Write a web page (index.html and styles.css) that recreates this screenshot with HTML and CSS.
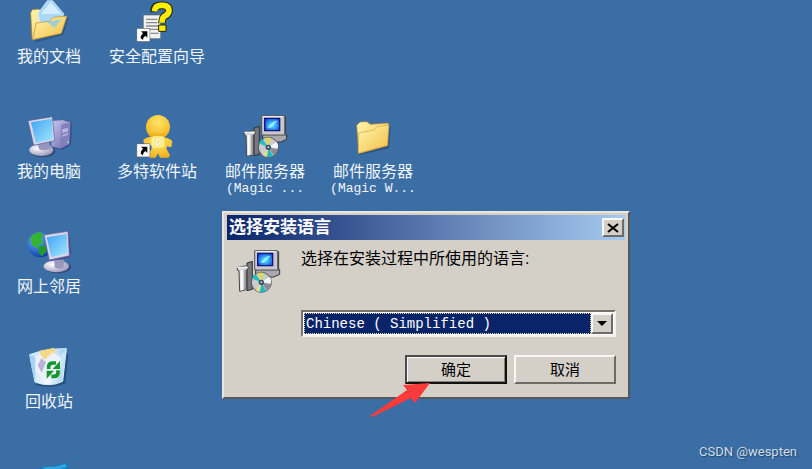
FILE: index.html
```html
<!DOCTYPE html>
<html lang="zh-CN">
<head>
    <meta charset="UTF-8">
    <meta name="viewport" content="width=device-width, initial-scale=1.0">
    <title>选择安装语言</title>
    <link rel="stylesheet" href="styles.css">
</head>
<body>
    <!-- Shared icon parts -->
    <svg class="defs" width="0" height="0" aria-hidden="true">
        <defs>
            <linearGradient id="folder" x1="0" y1="0" x2="1" y2="1">
                <stop offset="0" stop-color="#fff6ae"/>
                <stop offset="1" stop-color="#f2bd45"/>
            </linearGradient>
            <linearGradient id="screen" x1="0" y1="0" x2="1" y2="1">
                <stop offset="0" stop-color="#3fa4f4"/>
                <stop offset="1" stop-color="#a4e6ff"/>
            </linearGradient>
            <linearGradient id="tower" x1="0" y1="0" x2="1" y2="1">
                <stop offset="0" stop-color="#c9c8ee"/>
                <stop offset="1" stop-color="#6563a8"/>
            </linearGradient>
            <radialGradient id="base" cx="0.35" cy="0.35" r="0.7">
                <stop offset="0" stop-color="#ffffff"/>
                <stop offset="1" stop-color="#9d98bd"/>
            </radialGradient>
            <radialGradient id="gold" cx="0.5" cy="0.3" r="0.7">
                <stop offset="0" stop-color="#ffe66a"/>
                <stop offset="1" stop-color="#f3b21c"/>
            </radialGradient>
            <radialGradient id="globe" cx="0.35" cy="0.3" r="0.75">
                <stop offset="0" stop-color="#62b4f5"/>
                <stop offset="1" stop-color="#0c3bab"/>
            </radialGradient>
            <radialGradient id="glow" cx="0.5" cy="0.55" r="0.6">
                <stop offset="0" stop-color="#62f2ff"/>
                <stop offset="1" stop-color="#1148e0"/>
            </radialGradient>
            <linearGradient id="bin" x1="0" y1="0" x2="1" y2="0">
                <stop offset="0" stop-color="#bfe4fa"/>
                <stop offset="0.5" stop-color="#f4f8fd"/>
                <stop offset="1" stop-color="#9cc9ec"/>
            </linearGradient>
            <symbol id="installer" viewBox="93 45 144 132">
                <path d="M132 84l16-5v84l-16 4z" fill="#77777d" stroke="#333" stroke-width="3"/>
                <path d="M103 97l30-5 3 8-6 5v59l-20 5-2-62-5-2z" fill="#d8d8dc" stroke="#444" stroke-width="3"/>
                <path d="M116 106v60" stroke="#fff" stroke-width="6"/>
                <path d="M126 104v60" stroke="#8b8b90" stroke-width="4"/>
                <path d="M103 97h31" stroke="#f5f5f5" stroke-width="4"/>
                <path d="M158 104h72v14l-18 8h-54z" fill="#a9a9ae" stroke="#333" stroke-width="3"/>
                <path d="M155 47h68l4 4v54h-72z" fill="#c9c9cd" stroke="#55555a" stroke-width="3"/>
                <path d="M225 49v54" stroke="#37373c" stroke-width="4"/>
                <path d="M158 50h60" stroke="#f6f6f6" stroke-width="3"/>
                <path d="M164 55h45v37h-45z" fill="url(#glow)" stroke="#15157e" stroke-width="4"/>
                <path d="M171 82l23-20 10 0-23 22z" fill="#a4ffff" opacity=".7"/>
                <circle cx="175" cy="142" r="30" fill="#c9cbce" stroke="#53565c" stroke-width="3"/>
                <path d="M175 142l-12-27q12-5 21 0z" fill="#d9d866"/>
                <path d="M175 142l-28-12q4-8 11-12z" fill="#20bfc5"/>
                <path d="M175 142l-4 29q10 2 18-3z" fill="#21b8c4"/>
                <path d="M175 142l-17 24q6 4 12 5z" fill="#e7dc83"/>
                <path d="M175 142l25-17q6 9 4 20z" fill="#f4f4f4"/>
                <path d="M175 142l28 6q-3 12-12 18z" fill="#8b8d91"/>
                <circle cx="175" cy="142" r="8" fill="#334e62"/>
                <circle cx="175" cy="142" r="3" fill="#c6dae6"/>
            </symbol>
            <symbol id="shortcut-arrow" viewBox="0 0 42 42">
                <path d="M1 1h40v40H1z" fill="#fff" stroke="#444" stroke-width="2"/>
                <path d="M14 10h19v19l-6-6q-8 5-7 13l-7-5q-1-8 7-15z" fill="#000"/>
            </symbol>
        </defs>
    </svg>

    <main class="desktop">
        <button class="shortcut col-1 row-1" type="button">
            <svg class="icon" viewBox="75 0 144 132" aria-hidden="true">
                <path d="M103 122l82-22 18-48 3 4-17 49-80 22z" fill="#24476f" opacity=".6"/>
                <path d="M92 38l5-9 20-2 7 9 66 8-6 56-88 18z" fill="url(#folder)" stroke="#a67b28" stroke-width="2"/>
                <path d="M114 40l28-38h16l34 40-30 44-44-20z" fill="#a9d8fb" stroke="#e2f5ff" stroke-width="2"/>
                <path d="M122 42l30-36 32 36z" fill="#d3eeff"/>
                <path d="M98 119l11-50 40-5 10-12 42-4-17 52z" fill="url(#folder)" stroke="#bd8c2e" stroke-width="2"/>
                <path d="M142 66l42-8-21 26z" fill="#86cbef" opacity=".8"/>
            </svg>
            <span class="label">我的文档</span>
        </button>

        <button class="shortcut col-2 row-1" type="button">
            <svg class="icon" viewBox="399 0 144 132" aria-hidden="true">
                <path d="M430 45h52v71h-52z" fill="#f1f1f1" stroke="#666" stroke-width="2"/>
                <path d="M438 58h34M438 68h34M438 78h38M438 88h38M452 100h24" stroke="#8b8b8b" stroke-width="4"/>
                <path d="M461 36q1-20 20-20h10q16 2 16 15 0 11-12 17-9 4-9 22" fill="none" stroke="#24240a" stroke-width="23"/>
                <path d="M463 34q2-17 18-18h10q16 2 16 15 0 11-12 17-9 4-9 20" fill="none" stroke="#ffee00" stroke-width="17"/>
                <path d="M476 75h22v19h-22z" fill="#ffee00" stroke="#24240a" stroke-width="3"/>
                <use href="#shortcut-arrow" x="409" y="84" width="42" height="42"/>
            </svg>
            <span class="label">安全配置向导</span>
        </button>

        <button class="shortcut col-1 row-2" type="button">
            <svg class="icon" viewBox="75 45 144 132" aria-hidden="true">
                <path d="M158 66l35-8 22 10-2 67-29 15-26-8z" fill="#32336f" opacity=".6"/>
                <path d="M154 63l35-3 22 7-2 65-28 14-27-7z" fill="url(#tower)"/>
                <path d="M184 74l25-6-2 64-25 13z" fill="#817fbd"/>
                <path d="M187 88l17-5v11l-17 6zM187 105l17-6v5l-17 6z" fill="#b8b5df"/>
                <circle cx="204" cy="127" r="3" fill="#8de39a"/>
                <ellipse cx="128" cy="154" rx="38" ry="18" fill="#263457" opacity=".6"/>
                <ellipse cx="124" cy="150" rx="36" ry="18" fill="url(#base)"/>
                <path d="M112 127l33-5 8 23q-22 10-36 2z" fill="#9896bf"/>
                <path d="M84 62l73-12 7 72-63 14z" fill="#dad8e8" stroke="#5c5794" stroke-width="2"/>
                <path d="M93 67l62-11 4 62-52 10z" fill="url(#screen)"/>
            </svg>
            <span class="label">我的电脑</span>
        </button>

        <button class="shortcut col-2 row-2" type="button">
            <svg class="icon" viewBox="399 45 144 132" aria-hidden="true">
                <path d="M430 119q16-11 38-11t45 11l4 5-3 18-14-3v9l10 18-5 7h-25l-6-13-7 13h-19l-3-7 10-20v-10l-20-2q-6-8-5-15z" fill="url(#gold)"/>
                <circle cx="474" cy="81" r="36" fill="url(#gold)"/>
                <path d="M442 95q31 13 63 0-6 13-16 17h-31q-10-4-16-17z" fill="#f0af1b" opacity=".7"/>
                <rect x="454" y="109" width="39" height="34" rx="9" fill="#fff08d"/>
                <path d="M468 115h5q11 3 11 11t-12 11h-7zM472 120v11q7-1 7-6t-7-5z" fill="#fff" fill-rule="evenodd" stroke="#e6ad25"/>
                <use href="#shortcut-arrow" x="409" y="130" width="42" height="42"/>
            </svg>
            <span class="label">多特软件站</span>
        </button>

        <button class="shortcut col-3 row-2" type="button">
            <svg class="icon" aria-hidden="true"><use href="#installer"/></svg>
            <span class="label">邮件服务器</span>
            <span class="label-more">(Magic ...</span>
        </button>

        <button class="shortcut col-4 row-2" type="button">
            <svg class="icon" viewBox="417 45 144 132" aria-hidden="true">
                <path d="M447 163l88-20 5-65-6 60z" fill="#20446c" stroke="#20446c" stroke-width="4" opacity=".6"/>
                <path d="M440 76l10-10 21-1 10 8 54-4-2 68-87 24z" fill="url(#folder)" stroke="#a8802c" stroke-width="2"/>
                <path d="M445 159l1-60 46-9 9-10 36-5-5 61z" fill="url(#folder)" stroke="#d8a541" stroke-width="2"/>
            </svg>
            <span class="label">邮件服务器</span>
            <span class="label-more">(Magic W...</span>
        </button>

        <button class="shortcut col-1 row-3" type="button">
            <svg class="icon" viewBox="75 45 144 132" aria-hidden="true">
                <circle cx="121" cy="89" r="38" fill="url(#globe)"/>
                <path d="M91 68q14-19 34-15l6 10-9 9 10 11-15 5-2 12-19-9z" fill="#35b52f"/>
                <path d="M116 95l18-5 7 17-15 17-10-11z" fill="#249b27"/>
                <ellipse cx="174" cy="157" rx="39" ry="18" fill="#263457" opacity=".6"/>
                <ellipse cx="169" cy="154" rx="38" ry="18" fill="url(#base)"/>
                <path d="M163 134h30l-3 25q-15 5-26-2z" fill="#9b98be"/>
                <path d="M132 62l75-14 7 69-7 11-59 10z" fill="#4c4a91"/>
                <path d="M132 60l72-11 4 73-60 13z" fill="#d8d6e9" stroke="#6b659e" stroke-width="2"/>
                <path d="M140 67l60-10 3 58-49 11z" fill="url(#screen)"/>
            </svg>
            <span class="label">网上邻居</span>
        </button>

        <button class="shortcut col-1 row-4" type="button">
            <svg class="icon" viewBox="75 30 144 132" aria-hidden="true">
                <path d="M107 147q42 14 80-2l16-88-9 87q-42 18-87 3z" fill="#173a62" stroke="#173a62" stroke-width="4" opacity=".6"/>
                <path d="M89 59q50-19 110-18l-11 98q-40 19-83 2z" fill="url(#bin)" stroke="#d6efff" stroke-width="3"/>
                <path d="M117 48l45-10 8 29-39 9z" fill="#f5d886"/>
                <path d="M98 68l22-10 14 16 25-22 28 17-10 50-43 15-29-25z" fill="#eef0fb"/>
                <path d="M124 70l14 12-13 31-12-22z" fill="#b8b6d8"/>
                <path d="M89 59l17 7-1 73q-10-30-16-80z" fill="#a0d3f4"/>
                <path d="M199 41l-19 22 8 74z" fill="#c5e5fa"/>
                <path d="M146 102v-8q1-10 12-10h10" fill="none" stroke="#11972c" stroke-width="11"/>
                <path d="M180 78v24h-22z" fill="#11972c"/>
                <path d="M174 106v8q-1 10-12 10h-8" fill="none" stroke="#11972c" stroke-width="11"/>
                <path d="M140 131v-24h22z" fill="#11972c"/>
            </svg>
            <span class="label">回收站</span>
        </button>

        <button class="shortcut col-1 row-5" type="button" aria-label="程序">
            <svg class="icon" viewBox="75 375 144 132" aria-hidden="true">
                <path d="M116 401q20-8 44-7l38-10 7 8 2 70h-90z" fill="#127fc0"/>
                <path d="M124 399q20-5 38-3l34-9 4 10-40 10z" fill="#2fa5dc"/>
            </svg>
        </button>
    </main>

    <section class="dialog" role="dialog" aria-labelledby="dialog-title">
        <header class="titlebar">
            <h1 id="dialog-title">选择安装语言</h1>
            <button class="close" type="button" aria-label="关闭">
                <svg width="12" height="10" viewBox="0 0 12 10" aria-hidden="true">
                    <path d="M1 1l10 8M11 1L1 9" stroke="#000" stroke-width="2"/>
                </svg>
            </button>
        </header>
        <form class="content">
            <svg class="icon" aria-hidden="true"><use href="#installer"/></svg>
            <div class="fields">
                <label for="language">选择在安装过程中所使用的语言:</label>
                <div class="combo">
                    <select id="language">
                        <option>Chinese ( Simplified )</option>
                    </select>
                    <span class="drop" aria-hidden="true"></span>
                </div>
            </div>
            <div class="actions">
                <button class="action default" type="button">确定</button>
                <button class="action" type="button">取消</button>
            </div>
        </form>
    </section>

    <!-- Points at the confirm button -->
    <svg class="pointer" viewBox="0 0 62 36" aria-hidden="true">
        <path d="M1 34L38 8 34 3 61 1 46 21 42 16 3 35z" fill="#fb3b3b"/>
    </svg>

    <footer class="watermark">CSDN @wespten</footer>
</body>
</html>
```

FILE: styles.css
```css
* {
    box-sizing: border-box;
}
body {
    position: relative;
    margin: 0;
    background-color: #3b6ea5;
    color: #000;
    font-family: "Liberation Sans", "Noto Sans CJK SC", sans-serif;
    font-size: 16px;
}
button {
    padding: 0;
    color: inherit;
    font: inherit;
}
.defs {
    position: absolute;
}

/* Desktop icons */
.desktop {
    display: grid;
    grid-template-columns: repeat(4, 98px);
    grid-auto-rows: 105px;
    gap: 10px;
    height: 100vh;
    overflow: hidden;
}
.shortcut {
    display: flex;
    flex-direction: column;
    align-items: center;
    border: 0;
    background: none;
    color: #f0f5fa;
}
.icon {
    display: block;
    flex: none;
    width: 48px;
    height: 44px;
}
.label {
    margin-top: 3px;
    line-height: 20px;
    white-space: nowrap;
}
.label-more {
    font-family: "Liberation Mono", monospace;
    font-size: 13px;
    line-height: 14px;
    white-space: pre;
}
.col-1 { grid-column: 1; }
.col-2 { grid-column: 2; }
.col-3 { grid-column: 3; }
.col-4 { grid-column: 4; }
.row-1 { grid-row: 1; }
.row-2 { grid-row: 2; }
.row-3 { grid-row: 3; }
.row-4 { grid-row: 4; }
.row-5 { grid-row: 5; }

/* Setup dialog */
.dialog {
    position: absolute;
    top: 211px;
    left: 222px;
    width: 408px;
    padding: 2px 3px 3px;
    border: 2px solid;
    border-color: #e9e6e0 #55585c #55585c #e9e6e0;
    background-color: #d4d0c8;
}
.titlebar {
    display: flex;
    align-items: center;
    justify-content: space-between;
    height: 25px;
    padding: 0 1px 0 2px;
    background: linear-gradient(to right, #0a246a, #a6caf0);
}
.titlebar h1 {
    margin: 0;
    color: #fff;
    font-size: 17px;
    font-weight: bold;
    line-height: 24px;
}
.close,
.action,
.drop {
    display: flex;
    align-items: center;
    justify-content: center;
    border: 2px solid;
    border-color: #f8f7f5 #6d6b67 #6d6b67 #f8f7f5;
    background-color: #d4d0c8;
}
.close {
    width: 22px;
    height: 19px;
}
.content {
    display: grid;
    grid-template-columns: 48px 1fr;
    gap: 18px 19px;
    padding: 10px 9px 10px 7px;
}
.fields label {
    display: block;
    margin-bottom: 42px;
    line-height: 18px;
}
.combo {
    display: flex;
    height: 27px;
    padding: 1px;
    border: 2px solid;
    border-color: #77746f #f3f1ed #f3f1ed #77746f;
    background-color: #fff;
}
.combo select {
    flex: 1;
    min-width: 0;
    padding: 0 1px;
    border: 1px dotted #e3d8a0;
    border-radius: 0;
    appearance: none;
    background-color: #0a246a;
    color: #fff;
    font-family: "Liberation Mono", monospace;
    font-size: 14px;
}
.drop {
    width: 22px;
}
.drop::after {
    content: "";
    border: 5px solid transparent;
    border-top-color: #000;
    border-bottom: 0;
}
.actions {
    grid-column: 1 / -1;
    display: flex;
    justify-content: flex-end;
    gap: 7px;
}
.action {
    width: 102px;
    height: 29px;
    padding-bottom: 3px;
    font-size: 15px;
}
.default {
    border-color: #4b4b4b #111 #111 #4b4b4b;
    box-shadow: inset 1px 1px #f8f7f5, inset -1px -1px #85827d;
}

/* Overlays */
.pointer {
    position: absolute;
    top: 382px;
    left: 369px;
    width: 62px;
    height: 36px;
}
.watermark {
    position: absolute;
    right: 15px;
    bottom: 9px;
    color: #d0dce8;
    font-family: Roboto, sans-serif;
    font-size: 13px;
    line-height: 16px;
    text-shadow: 1px 1px 1px #24466b;
}
```
